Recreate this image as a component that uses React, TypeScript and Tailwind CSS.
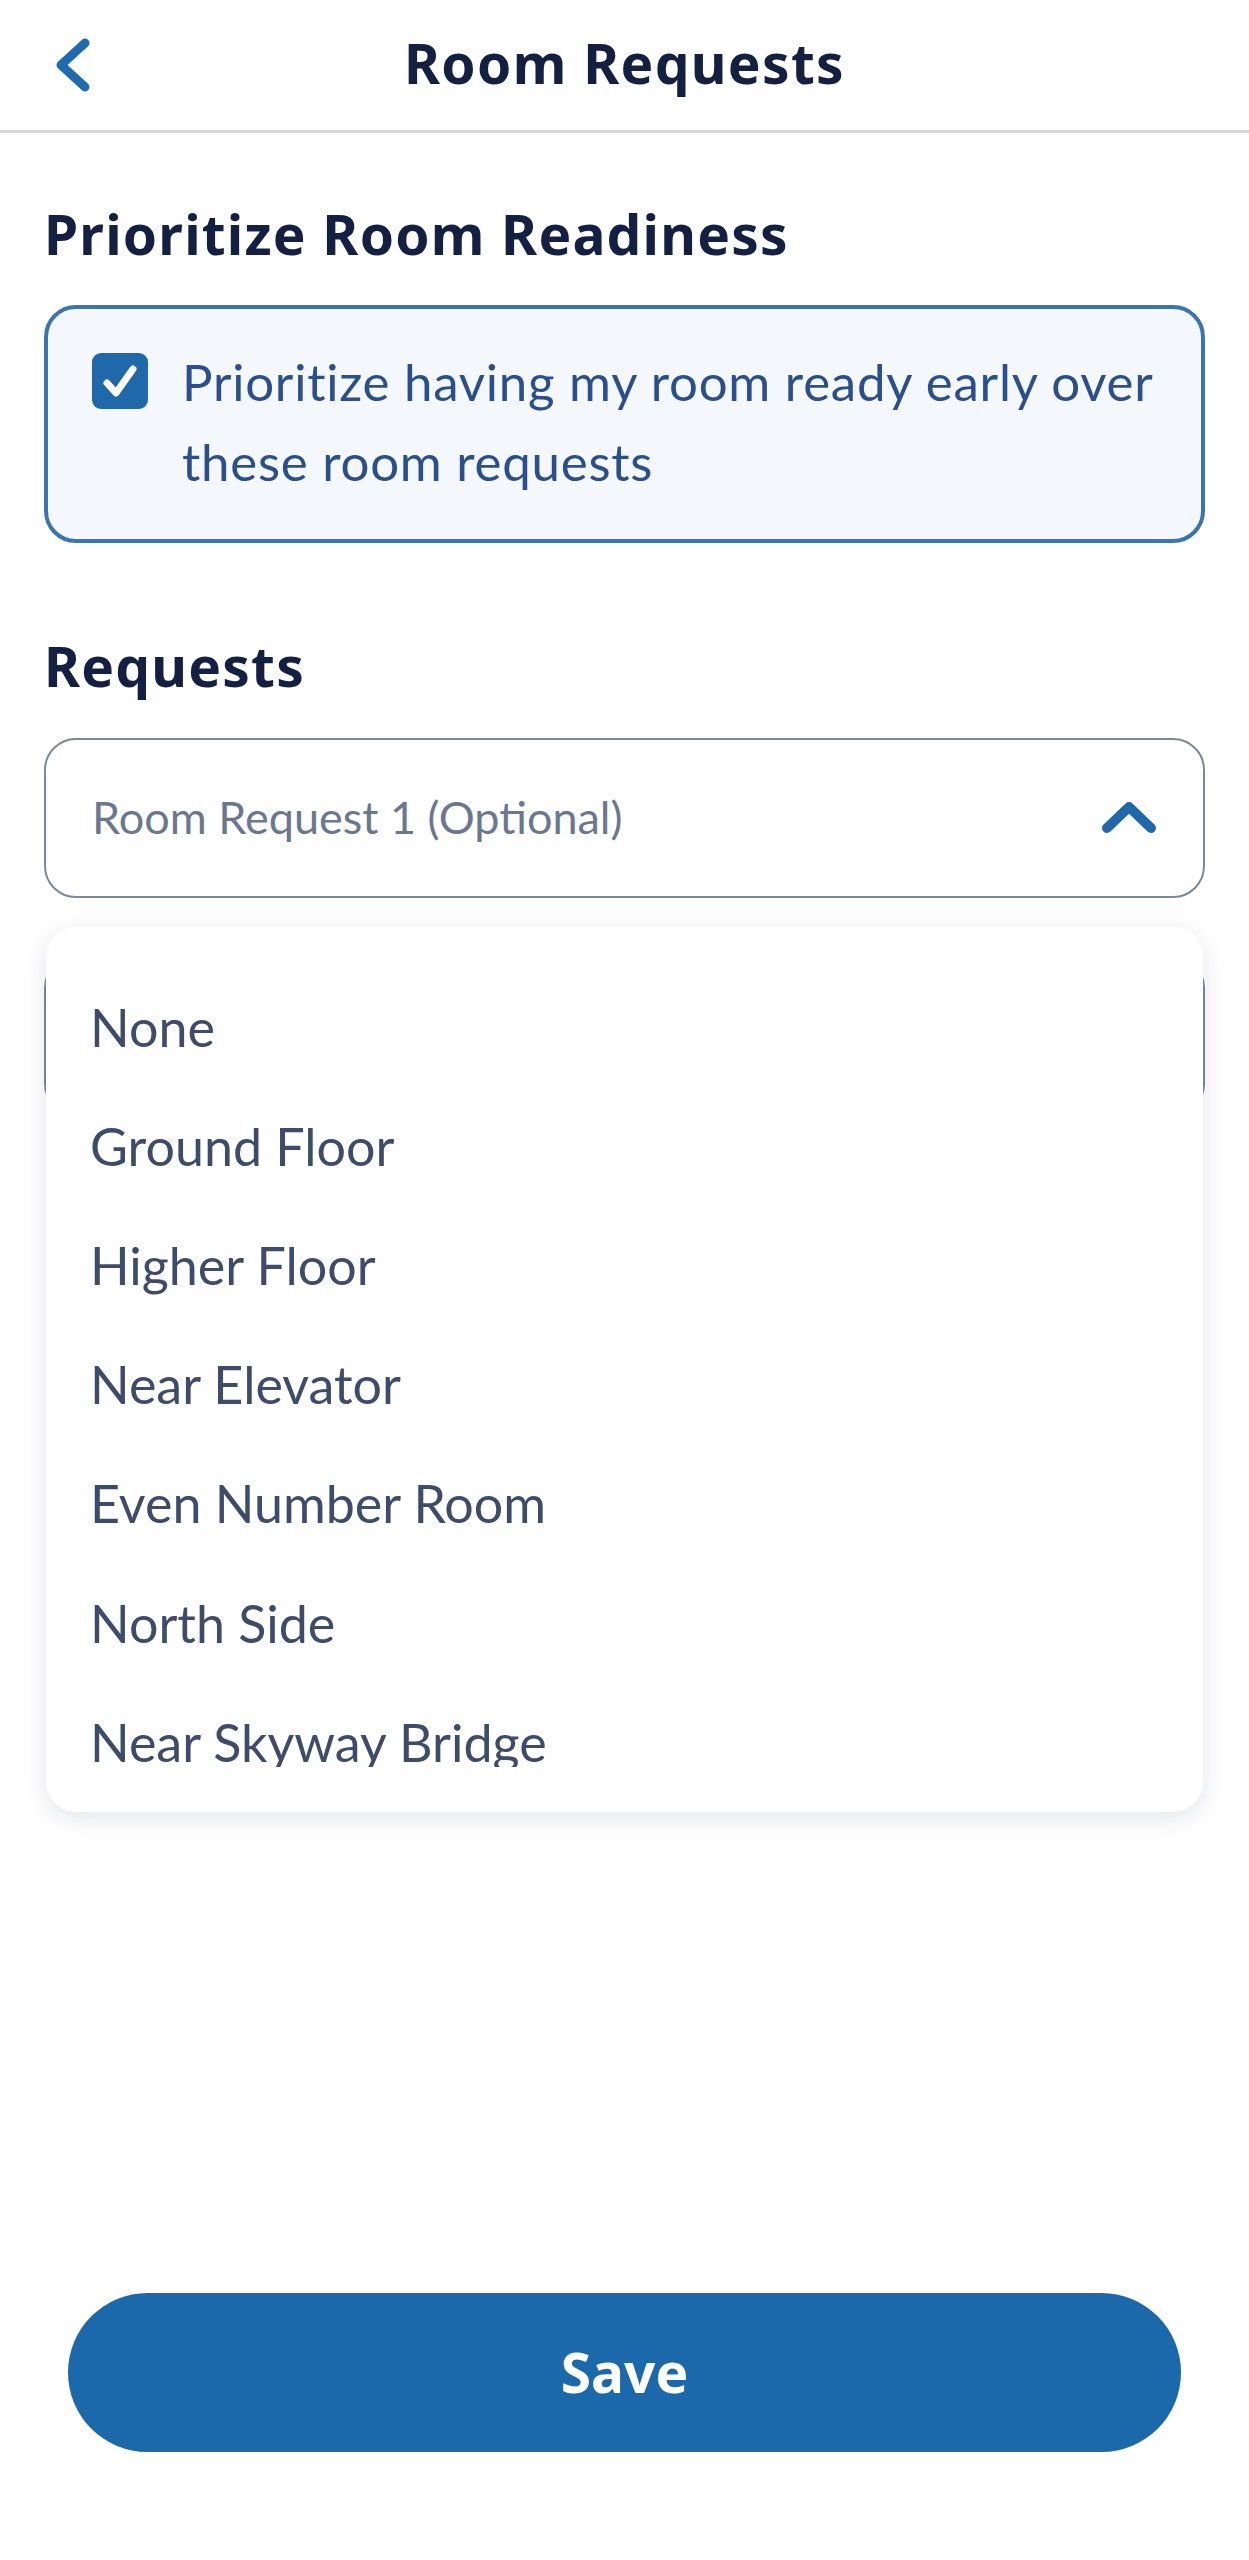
import React from "react";

const items = [
  "None",
  "Ground Floor",
  "Higher Floor",
  "Near Elevator",
  "Even Number Room",
  "North Side",
  "Near Skyway Bridge",
];

export default function App() {
  return (
    <div className="w-[1249px] min-h-[2560px] bg-white flex flex-col font-['Lato',_'Noto_Sans',_sans-serif]">
      {/* Header */}
      <div className="h-[133px] border-b-[3px] border-[#d3d7dd] grid grid-cols-[1fr_auto_1fr] items-center">
        <div className="pl-[52px] flex items-center">
          <svg width="42" height="60" viewBox="0 0 42 60" fill="none">
            <polyline
              points="33,8 9,30 33,52"
              stroke="#1f6bb0"
              strokeWidth="9"
              strokeLinecap="round"
              strokeLinejoin="round"
            />
          </svg>
        </div>
        <h1 className="font-['Noto_Sans',_sans-serif] text-[55px] leading-[66px] font-bold text-[#142042] tracking-[1.3px] -mt-[4px]">
          Room Requests
        </h1>
        <div />
      </div>

      <div className="px-[44px] flex flex-col">
        <h2 className="mt-[68px] font-['Noto_Sans',_sans-serif] text-[55px] leading-[66px] font-bold text-[#142042] tracking-[1.2px]">
          Prioritize Room Readiness
        </h2>

        {/* Checkbox card */}
        <div className="mt-[38px] border-[4px] border-[#3b75b1] rounded-[32px] bg-[#f4f8fc] pl-[44px] pr-[30px] pt-[33px] pb-[37px] flex items-start gap-[34px]">
          <div className="mt-[11px] w-[56px] h-[56px] shrink-0 rounded-[9px] bg-[#1f68aa] flex items-center justify-center">
            <svg width="56" height="56" viewBox="0 0 56 56" fill="none">
              <polyline
                points="15,30 24,40 41,16"
                stroke="white"
                strokeWidth="7"
                strokeLinecap="round"
                strokeLinejoin="round"
              />
            </svg>
          </div>
          <p className="text-[51px] leading-[80px] text-[#2a4f8f] tracking-[0.75px]">
            Prioritize having my room ready early over these room requests
          </p>
        </div>

        <h2 className="mt-[90px] font-['Noto_Sans',_sans-serif] text-[55px] leading-[66px] font-bold text-[#142042] tracking-[1.2px]">
          Requests
        </h2>

        {/* Select 1 */}
        <div className="mt-[39px] h-[160px] border-[2px] border-[#7b879e] rounded-[32px] bg-white flex items-center justify-between pl-[46px] pr-[46px]">
          <span className="text-[45px] text-[#6b7791]">Room Request 1 (Optional)</span>
          <svg width="56" height="36" viewBox="0 0 56 36" fill="none">
            <polyline
              points="6,28 28,7 50,28"
              stroke="#1f68aa"
              strokeWidth="10"
              strokeLinecap="round"
              strokeLinejoin="round"
            />
          </svg>
        </div>

        {/* Select 2 with open menu overlay */}
        <div className="relative mt-[58px]">
          <div className="h-[160px] border-[2px] border-[#7b879e] rounded-[32px] bg-white" />

          <div className="absolute left-[2px] right-[2px] top-[-29px] bg-white rounded-[30px] shadow-[0_6px_24px_rgba(30,45,80,0.12)] pt-[40px] pb-[45px]">
            <div className="h-[800px] overflow-hidden">
              {items.map((it) => (
                <div key={it} className="h-[119.2px] flex items-center pl-[44px] text-[52px] text-[#3e4c6c]">
                  {it}
                </div>
              ))}
            </div>
          </div>
        </div>
      </div>

      {/* Save */}
      <div className="mt-auto px-[68px] pb-[108px]">
        <button className="w-full h-[159px] rounded-full bg-[#1b68aa] text-white font-['Noto_Sans',_sans-serif] text-[55px] font-bold">
          Save
        </button>
      </div>
    </div>
  );
}
